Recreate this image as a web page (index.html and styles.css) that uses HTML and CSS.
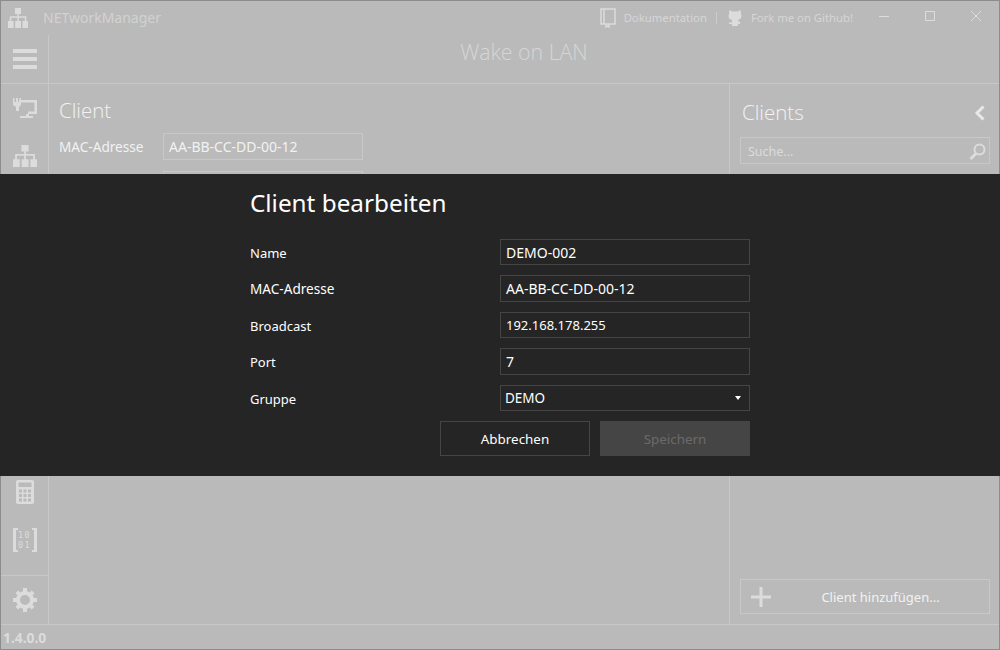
FILE: index.html
```html
<!DOCTYPE html>
<html lang="de">
<head>
<meta charset="UTF-8">
<title>NETworkManager</title>
<link rel="stylesheet" href="styles.css">
</head>
<body>
<div class="window">
    <div class="titlebar">
        <svg class="app-logo" width="20" height="20" viewBox="0 0 20 20"><path d="M7 0h6v6h-2.200v2.200h7.500V13H20v7h-5.500v-7h2.300v-3.300h-6V13h2.200v7H7.200v-7h2.100V9.700h-6V13h2.300v7H0v-7h1.800V8.200h7.500V6H7z" fill="#dcdcdc"/></svg>
        <span class="app-name">NETworkManager</span>
        <div class="title-links">
            <svg width="16" height="20" viewBox="0 0 16 20"><path d="M1 1h14v15H1zM4 1v15M6 16v3l1.500-1 1.500 1v-3" fill="none" stroke="#dcdcdc" stroke-width="1.500"/></svg>
            <span class="link-text">Dokumentation</span>
            <span class="link-sep"></span>
            <svg width="16" height="18" viewBox="0 0 16 18"><path d="M2.500 1l3 1.500h5l3-1.500.5 4c1 2.500.5 5-3 6v1.500h2V15h-2v2H5v-2H2v-1.500h3V11C1.500 10 1 7.500 2 5z" fill="#dcdcdc"/></svg>
            <span class="link-text">Fork me on Github!</span>
        </div>
        <div class="win-buttons">
            <span class="win-btn"><svg width="12" height="12" viewBox="0 0 12 12"><path d="M1 6.500h10" stroke="#dcdcdc" fill="none"/></svg></span>
            <span class="win-btn"><svg width="12" height="12" viewBox="0 0 12 12"><path d="M1.500 1.500h9v9h-9z" stroke="#dcdcdc" fill="none"/></svg></span>
            <span class="win-btn"><svg width="12" height="12" viewBox="0 0 12 12"><path d="M1 1l10 10M11 1L1 11" stroke="#dcdcdc" fill="none"/></svg></span>
        </div>
    </div>

    <div class="header-row">
        <div class="menu-cell">
            <span class="burger"></span>
            <span class="burger"></span>
            <span class="burger"></span>
        </div>
        <div class="page-title">Wake on LAN</div>
    </div>

    <div class="main">
        <div class="sidebar">
            <div class="side-items">
                <svg class="side-icon" width="24" height="20" viewBox="0 0 24 20"><path d="M6 2h18v14H15v-2.500h6.500v-9H6zM0 0h1.500v4H3V0h2v4h1.500V0H8v7l-2 2v4H3V9L0 7zM13 16h3v2h4v2H7v-2h6z" fill="#dcdcdc"/></svg>
                <svg class="side-icon second" width="24" height="22" viewBox="0 0 20 20" preserveAspectRatio="none"><path d="M7 0h6v6h-2.200v2.200h7.500V13H20v7h-5.500v-7h2.300v-3.300h-6V13h2.200v7H7.200v-7h2.100V9.700h-6V13h2.300v7H0v-7h1.800V8.200h7.500V6H7z" fill="#dcdcdc"/></svg>
            </div>
            <div class="side-lower">
                <svg class="side-icon" width="18" height="24" viewBox="0 0 18 24"><rect width="18" height="24" rx="2" fill="#dcdcdc"/><rect x="2.500" y="2.500" width="13" height="4.500" fill="#bababa"/><path d="M3 9.500h3v3H3zM7.500 9.500h3v3h-3zM12 9.500h3v3h-3zM3 14h3v3H3zM7.500 14h3v3h-3zM12 14h3v3h-3zM3 18.500h3v3H3zM7.500 18.500h3v3h-3zM12 18.500h3v3h-3z" fill="#bababa"/></svg>
                <div class="binary">
                    <span class="bracket left"></span>
                    <span class="bits">10<br>01</span>
                    <span class="bracket right"></span>
                </div>
            </div>
            <div class="side-settings">
                <svg width="24" height="24" viewBox="0 0 24 24"><circle cx="12" cy="12" r="7" fill="none" stroke="#dcdcdc" stroke-width="4"/><path d="M10 0h4v4h-4zM10 20h4v4h-4zM0 10h4v4H0zM20 10h4v4h-4zM2.500 5.300l2.800-2.800 3 3-2.800 2.800zM18.700 2.500l2.800 2.800-3 3-2.800-2.800zM2.500 18.700l3-3 2.800 2.800-3 3zM15.700 18.500l2.800-2.800 3 3-2.800 2.800z" fill="#dcdcdc"/></svg>
            </div>
        </div>

        <div class="content">
            <h2 class="section-title">Client</h2>
            <div class="field-row">
                <span class="bg-label">MAC-Adresse</span>
                <span class="bg-input">AA-BB-CC-DD-00-12</span>
            </div>
            <div class="field-row second-row">
                <span class="bg-label"></span>
                <span class="bg-input"></span>
            </div>
        </div>

        <div class="clients">
            <div class="clients-head">
                <h2 class="section-title">Clients</h2>
                <svg width="12" height="16" viewBox="0 0 12 16"><path d="M9.500 1.500L3 8l6.500 6.500" fill="none" stroke="#e8e8e8" stroke-width="3"/></svg>
            </div>
            <div class="search">
                <span>Suche...</span>
                <svg width="17" height="17" viewBox="0 0 17 17"><circle cx="10.500" cy="6.500" r="5" fill="none" stroke="#dcdcdc" stroke-width="2"/><path d="M7 10.500l-5.500 5.500" stroke="#dcdcdc" stroke-width="3" fill="none"/></svg>
            </div>
            <div class="add-client">
                <svg width="22" height="22" viewBox="0 0 22 22"><path d="M9.500 1h3v8.500H21v3h-8.500V21h-3v-8.500H1v-3h8.500z" fill="#dcdcdc"/></svg>
                <span class="add-text">Client hinzufügen...</span>
            </div>
        </div>
    </div>

    <div class="statusbar">1.4.0.0</div>
</div>

<div class="dialog">
    <div class="dialog-inner">
        <h1 class="dialog-title">Client bearbeiten</h1>
        <div class="form">
            <label>Name</label>
            <div class="input">DEMO-002</div>
            <label class="caps">MAC-Adresse</label>
            <div class="input">AA-BB-CC-DD-00-12</div>
            <label>Broadcast</label>
            <div class="input digits">192.168.178.255</div>
            <label>Port</label>
            <div class="input">7</div>
            <label>Gruppe</label>
            <div class="input select">DEMO<span class="caret"></span></div>
        </div>
        <div class="buttons">
            <div class="btn">Abbrechen</div>
            <div class="btn disabled">Speichern</div>
        </div>
    </div>
</div>
</body>
</html>
```
FILE: styles.css
```css
html, body {
    margin: 0;
    padding: 0;
}

body {
    width: 1000px;
    height: 650px;
    overflow: hidden;
    position: relative;
    font-family: "Noto Sans", sans-serif;
    font-size: 13px;
    background-color: #bababa;
}

.window {
    height: 650px;
    box-sizing: border-box;
    display: flex;
    flex-direction: column;
    border: 1px solid #8c8c8c;
    color: #e8e8e8;
}

.titlebar {
    height: 34px;
    flex: none;
    box-sizing: border-box;
    display: flex;
    align-items: center;
    padding-left: 7px;
    padding-bottom: 1px;
}

.app-name {
    margin-left: 15px;
    font-size: 14px;
    color: #d2d2d2;
}

.title-links {
    margin-left: auto;
    display: flex;
    align-items: center;
    color: #d6d6d6;
}

.link-text {
    margin-left: 8px;
    font-size: 11.300px;
}

.link-sep {
    width: 1px;
    height: 12px;
    margin: 0 10px 0 9px;
    background-color: #cccccc;
}

.win-buttons {
    display: flex;
    margin-left: 8px;
    margin-bottom: 3px;
}

.win-btn {
    width: 46px;
    display: flex;
    justify-content: center;
}

.header-row {
    height: 48px;
    flex: none;
    display: flex;
    border-bottom: 1px solid #c8c8c8;
}

.menu-cell {
    width: 48px;
    flex: none;
    box-sizing: border-box;
    border-right: 1px solid #c8c8c8;
    display: flex;
    flex-direction: column;
    align-items: center;
    justify-content: center;
    gap: 4px;
}

.burger {
    width: 24px;
    height: 4px;
    background-color: #dcdcdc;
}

.page-title {
    flex: 1;
    text-align: center;
    font-family: "Open Sans", sans-serif;
    font-weight: 300;
    font-size: 21.300px;
    line-height: 33px;
    color: #d6d6d6;
}

.main {
    flex: 1;
    display: flex;
    min-height: 0;
}

.sidebar {
    width: 47px;
    flex: none;
    display: flex;
    flex-direction: column;
    border-right: 1px solid #c8c8c8;
}

.side-items {
    display: flex;
    flex-direction: column;
    align-items: center;
    padding-top: 14px;
}

.side-icon {
    display: block;
}

.side-icon.second {
    margin-top: 27px;
}

.side-lower {
    margin-top: 313px;
    display: flex;
    flex-direction: column;
    align-items: center;
}

.binary {
    margin-top: 24px;
    width: 24px;
    height: 24px;
    display: flex;
    justify-content: space-between;
    align-items: center;
}

.bracket {
    height: 24px;
    border: 2px solid #dcdcdc;
    box-sizing: border-box;
    width: 5px;
}

.bracket.left {
    border-left-width: 3px;
    border-right: none;
}

.bracket.right {
    border-right-width: 3px;
    border-left: none;
}

.bits {
    font-family: "DejaVu Sans Mono", monospace;
    font-size: 8.500px;
    line-height: 10px;
    letter-spacing: 1.500px;
    color: #dcdcdc;
    text-align: center;
}

.side-settings {
    margin-top: auto;
    height: 49px;
    box-sizing: border-box;
    border-top: 1px solid #c8c8c8;
    display: flex;
    align-items: center;
    justify-content: center;
}

.content {
    flex: 1;
    padding: 12px 10px;
}

.section-title {
    margin: 0;
    font-size: 20.500px;
    font-weight: 300;
    line-height: 29px;
    color: #f2f2f2;
    font-family: "Open Sans", sans-serif;
}

.field-row {
    margin-top: 8px;
    display: flex;
    align-items: center;
}

.second-row {
    margin-top: 11px;
}

.bg-label {
    width: 104px;
    font-size: 13.600px;
    color: #f2f2f2;
}

.bg-input {
    width: 200px;
    height: 27px;
    box-sizing: border-box;
    border: 1px solid #c8c8c8;
    padding-left: 5px;
    font-size: 14px;
    line-height: 25px;
    color: #f2f2f2;
}

.clients {
    width: 270px;
    flex: none;
    box-sizing: border-box;
    border-left: 1px solid #c8c8c8;
    padding: 14px 9px 10px 10px;
    display: flex;
    flex-direction: column;
}

.clients-head {
    display: flex;
    align-items: center;
    justify-content: space-between;
    padding: 0 4px 0 2px;
}

.search {
    margin-top: 10px;
    height: 27px;
    box-sizing: border-box;
    border: 1px solid #c8c8c8;
    display: flex;
    align-items: center;
    justify-content: space-between;
    padding: 1px 3px 0 7px;
    font-size: 12.500px;
    color: #dcdcdc;
}

.add-client {
    margin-top: auto;
    height: 35px;
    box-sizing: border-box;
    border: 1px solid #c8c8c8;
    display: flex;
    align-items: center;
    padding-left: 9px;
}

.add-text {
    flex: 1;
    text-align: center;
    color: #f2f2f2;
}

.statusbar {
    height: 24px;
    flex: none;
    border-top: 1px solid #c8c8c8;
    padding-left: 2px;
    font-weight: bold;
    font-size: 13.800px;
    line-height: 25px;
    color: #dcdcdc;
}

.dialog {
    position: absolute;
    left: 0;
    right: 0;
    top: 174px;
    height: 302px;
    background-color: #252525;
    color: #ffffff;
}

.dialog-inner {
    width: 500px;
    margin: 0 auto;
}

.dialog-title {
    margin: 0;
    padding-top: 12px;
    font-size: 24.300px;
    font-weight: normal;
    line-height: 34px;
}

.form {
    margin-top: 18.900px;
    display: grid;
    grid-template-columns: 250px 250px;
    row-gap: 10.100px;
    align-items: center;
}

.form label {
    font-size: 13px;
    line-height: 18px;
    padding-top: 1.400px;
}

.form label.caps {
    font-size: 13.600px;
    padding-top: 0;
}

.input {
    height: 26.400px;
    box-sizing: border-box;
    border: 1px solid #454545;
    padding-left: 5px;
    line-height: 25.600px;
    font-size: 14px;
    position: relative;
}

.digits {
    font-size: 13px;
}

.select {
    padding-left: 4px;
    font-size: 13.500px;
}

.caret {
    position: absolute;
    right: 8px;
    top: 10px;
    border-left: 3px solid transparent;
    border-right: 3px solid transparent;
    border-top: 4px solid #ffffff;
}

.buttons {
    margin-top: 9.700px;
    display: flex;
    justify-content: flex-end;
    gap: 10px;
}

.btn {
    width: 150px;
    height: 35px;
    box-sizing: border-box;
    border: 1px solid #454545;
    font-size: 13.400px;
    text-align: center;
    line-height: 34px;
}

.btn.disabled {
    background-color: #454545;
    color: #6b6b6b;
}
```
